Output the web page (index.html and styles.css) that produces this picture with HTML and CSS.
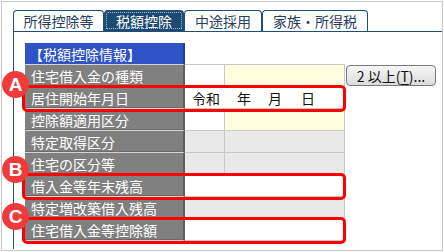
FILE: index.html
```html
<!DOCTYPE html>
<html lang="ja">
<head>
<meta charset="utf-8">
<link rel="stylesheet" href="styles.css">
</head>
<body>
<div class="frame">
  <div class="tabs">
    <div class="tab tab-1">所得控除等</div>
    <div class="tab tab-2 tab-active">税額控除</div>
    <div class="tab tab-3">中途採用</div>
    <div class="tab tab-4">家族・所得税</div>
  </div>
  <div class="panel">
    <div class="sheet">
      <div class="grid">
        <div class="head">【税額控除情報】</div>
        <div class="head-fill"></div>

        <div class="label">住宅借入金の種類</div>
        <div class="cell white"></div>
        <div class="cell yellow"></div>
        <button class="btn" type="button">2 以上(<u>T</u>)...</button>

        <div class="label">居住開始年月日</div>
        <div class="cell white wide date"><span>令和</span><span>年</span><span>月</span><span class="last">日</span></div>

        <div class="label">控除額適用区分</div>
        <div class="cell white"></div>
        <div class="cell yellow"></div>

        <div class="label">特定取得区分</div>
        <div class="cell gray"></div>
        <div class="cell gray"></div>

        <div class="label">住宅の区分等</div>
        <div class="cell gray"></div>
        <div class="cell gray"></div>

        <div class="label">借入金等年末残高</div>
        <div class="cell white wide"></div>

        <div class="label">特定増改築借入残高</div>
        <div class="cell gray wide"></div>

        <div class="label">住宅借入金等控除額</div>
        <div class="cell white wide"></div>
      </div>

      <div class="ring ring-a"></div>
      <div class="ring ring-b"></div>
      <div class="ring ring-c"></div>
      <div class="badge badge-a">A</div>
      <div class="badge badge-b">B</div>
      <div class="badge badge-c">C</div>
    </div>
  </div>
</div>
</body>
</html>
```

FILE: styles.css
```css
html, body {
  margin: 0;
  padding: 0;
  background: #ffffff;
}

body {
  font-family: "Noto Sans CJK JP", "Noto Sans", sans-serif;
  font-size: 14px;
  color: #111;
}

.frame {
  box-sizing: border-box;
  width: 442px;
  height: 250px;
  margin: 1px;
  border: 1px solid #c8c8c8;
  display: flex;
  flex-direction: column;
  overflow: hidden;
}

.tabs {
  display: flex;
  padding: 8px 0 0 11px;
}

.tab {
  box-sizing: border-box;
  height: 21px;
  border: 1px solid #1f4e79;
  border-bottom: none;
  border-radius: 4px 4px 0 0;
  display: flex;
  align-items: center;
  justify-content: center;
  color: #263e5e;
  font-size: 14px;
  line-height: 1;
  white-space: nowrap;
}

.tab-1 { width: 91px; }
.tab-2 { width: 80px; }
.tab-3 { width: 78px; }
.tab-4 { width: 106px; }

.tab-active {
  background: #1d4a72;
  color: #ffffff;
  outline: 1px dotted #a9bed3;
  outline-offset: -3px;
}

.panel {
  flex: 1;
  margin: 0 0 1px 11px;
  border-top: 1px solid #1f4e79;
  border-left: 1px solid #1f4e79;
  padding: 11px 0 0 11px;
}

.sheet {
  position: relative;
}

.grid {
  display: grid;
  grid-template-columns: 160px 40px 120px auto;
  grid-auto-rows: 22px;
}

.head,
.label {
  grid-column: 1;
  box-sizing: border-box;
  display: flex;
  align-items: center;
  padding-left: 6px;
  color: #ffffff;
  font-size: 14px;
  line-height: 1;
  white-space: nowrap;
  border-bottom: 1px solid #d4d4d4;
}

.head {
  background: #2f52c6;
  border-right: 2px solid #1f3c9e;
  padding-left: 4px;
}

.label {
  background: #808080;
  border-right: 2px solid #5e5e5e;
  box-shadow: inset 0 -1px 0 #6c6c6c;
}

.head-fill {
  grid-column: 2 / span 2;
  border-bottom: 1px solid #c8c8c8;
}

.cell {
  box-sizing: border-box;
  border-right: 1px solid #c8c8c8;
  border-bottom: 1px solid #c8c8c8;
}

.wide {
  grid-column: span 2;
}

.white { background: #ffffff; }
.yellow { background: #ffffe0; }
.gray { background: #e9e9e9; }

.date {
  display: flex;
  align-items: center;
  gap: 17px;
  padding-left: 7px;
  font-size: 14px;
  line-height: 1;
  color: #111;
}

.date .last {
  margin-left: 2px;
}

.btn {
  grid-column: 4;
  align-self: start;
  box-sizing: border-box;
  width: 90px;
  height: 21px;
  margin: 0 0 0 1px;
  padding: 0;
  border: 1px solid #7a7a7a;
  border-radius: 4px;
  background: linear-gradient(#f6f6f6, #dcdcdc);
  font-family: "Noto Sans CJK JP", "Noto Sans", sans-serif;
  font-size: 14px;
  line-height: 1;
  color: #111;
  display: flex;
  align-items: center;
  justify-content: center;
}

.btn u {
  text-decoration-thickness: 1px;
  text-underline-offset: 2px;
}

.ring {
  position: absolute;
  left: -3px;
  width: 324px;
  height: 27px;
  box-sizing: border-box;
  border: 3px solid #ff0000;
  border-radius: 5px;
}

.ring-a { top: 42px; }
.ring-b { top: 130px; }
.ring-c { top: 174px; }

.badge {
  position: absolute;
  left: -23px;
  width: 27px;
  height: 27px;
  border-radius: 50%;
  background: #ef3b3b;
  color: #ffffff;
  font-family: "Liberation Sans", Arial, sans-serif;
  font-weight: 700;
  font-size: 19px;
  line-height: 27px;
  text-align: center;
}

.badge-a { top: 28px; }
.badge-b { top: 113px; }
.badge-c { top: 160px; }
```
